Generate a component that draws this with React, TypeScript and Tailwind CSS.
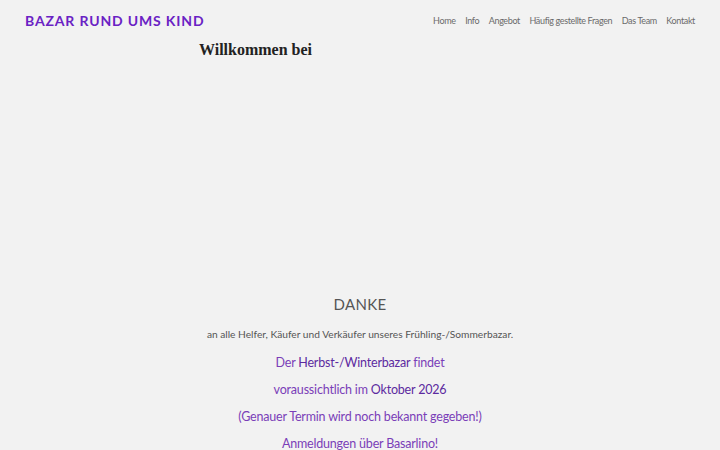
export default function App() {
  const nav = ['Home', 'Info', 'Angebot', 'Häufig gestellte Fragen', 'Das Team', 'Kontakt'];

  return (
    <div className="min-h-[450px] bg-[#f2f2f2] font-['Lato',sans-serif] overflow-hidden">
      {/* Header */}
      <header className="flex items-center justify-between pl-[25px] pr-[25px] h-[41px]">
        <h1 className="text-[14px] font-bold tracking-[0.06em] text-[#6a22c4] leading-none pt-[1px]">
          BAZAR RUND UMS KIND
        </h1>
        <nav className="flex gap-[9.5px] text-[9px] text-[#6b6b6b] tracking-[-0.04em]">
          {nav.map((n) => (
            <a key={n} href="#" className="leading-none">
              {n}
            </a>
          ))}
        </nav>
      </header>

      {/* Welcome */}
      <div className="pl-[199px]">
        <h2 className="font-['Liberation_Serif',serif] text-[16px] font-bold text-[#222] leading-none pt-[1px]">
          Willkommen bei
        </h2>
      </div>

      {/* Notice */}
      <section className="mt-[239px] flex flex-col items-center text-center">
        <p className="text-[15px] text-[#555] tracking-[0.02em] leading-none">DANKE</p>
        <p className="mt-[17px] text-[10.2px] text-[#555] leading-none">
          an alle Helfer, Käufer und Verkäufer unseres Frühling-/Sommerbazar.
        </p>
        <div className="mt-[18px] flex flex-col gap-[14.5px] text-[12.5px] tracking-[-0.015em] text-[#7a3eb8] leading-none">
          <p>
            Der <span className="text-[#5c2aa0]">Herbst-/Winterbazar</span> findet
          </p>
          <p>
            voraussichtlich im <span className="text-[#5c2aa0]">Oktober 2026</span>
          </p>
          <p>(Genauer Termin wird noch bekannt gegeben!)</p>
          <p>Anmeldungen über Basarlino!</p>
        </div>
      </section>
    </div>
  );
}
